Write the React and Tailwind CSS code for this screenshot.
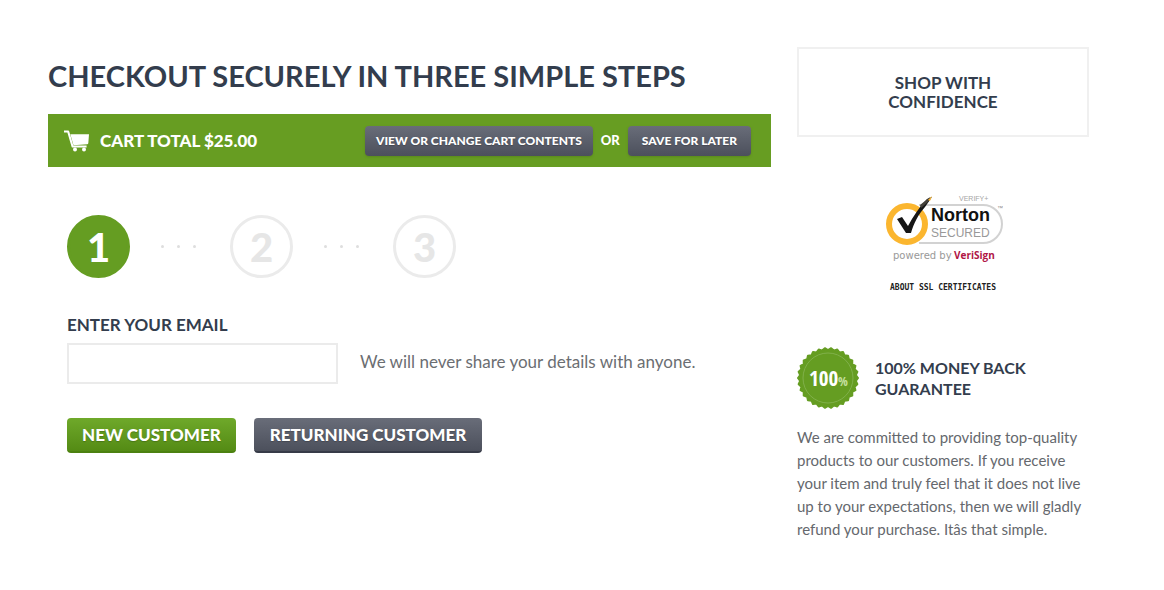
import React, { useState } from 'react'

const steps = [1, 2, 3]

const CartIcon = () => (
    <svg className="w-[26px] h-[22px] shrink-0" viewBox="0 0 26 22" fill="none" aria-hidden="true">
        <path d="M0 1.600h4.200l4.400 15h14" stroke="#fff" strokeWidth="2" strokeLinejoin="round" />
        <path d="M6.300 4.200h18.700l-.7 9c-.1.700-.5 1-1.200 1L9.500 15.200z" fill="#fff" />
        <circle cx="11" cy="19.400" r="2" fill="#fff" />
        <circle cx="20" cy="19.400" r="2" fill="#fff" />
    </svg>
)

const NortonLogo = () => (
    <svg className="w-[120px] h-[70px]" viewBox="0 0 120 70" role="img" aria-label="Norton Secured, powered by VeriSign">
        <path d="M36 10h64a19 19 0 0 1 0 38H36" fill="none" stroke="#d2d2d2" strokeWidth="2" />
        <circle cx="24" cy="29" r="18" fill="#fff" stroke="#fbb62f" strokeWidth="6" />
        <path d="M14 24l5-2 6 9C30 22 36 12 44 4l5-2-7 10C35 20 31 28 28 38h-5z" fill="#161616" />
        <path d="M37 10l10-8-2 5-7 6z" fill="#44403a" />
        <path d="M45 5l4-4-2 5z" fill="#fbb62f" />
        <text x="76" y="6" fontSize="7" fill="#a5a5a5" fontFamily="Liberation Sans, Arial, sans-serif">VERIFY+</text>
        <text x="114" y="15" fontSize="6" fill="#8a8a8a" fontFamily="Liberation Sans, Arial, sans-serif">&#8482;</text>
        <text x="48" y="26" fontSize="18" fontWeight="700" fill="#111" fontFamily="Liberation Sans, Arial, sans-serif">Norton</text>
        <text x="48" y="42" fontSize="12" fill="#999" fontFamily="Liberation Sans, Arial, sans-serif">SECURED</text>
        <text x="10" y="64" fontSize="10" fill="#999" fontFamily="DejaVu Sans, sans-serif">powered by</text>
        <text x="71" y="64" fontSize="10" fontWeight="700" fill="#b01546" fontFamily="Open Sans, sans-serif">VeriSign</text>
    </svg>
)

// alternating outer / inner radius gives the seal its toothed edge
const sealPoints = Array.from({ length: 60 }, (_, i) => {
    const radius = i % 2 === 0 ? 30 : 28
    const angle = (i * Math.PI) / 30
    return `${(31 + radius * Math.cos(angle)).toFixed(2)},${(32 + radius * Math.sin(angle)).toFixed(2)}`
}).join(' ')

const Seal = () => (
    <svg className="w-16 h-16 shrink-0" viewBox="0 0 64 64" aria-hidden="true">
        <polygon points={sealPoints} fill="#659d22" stroke="#659d22" strokeWidth="2" strokeLinejoin="round" />
        <circle cx="31" cy="32" r="25" fill="none" stroke="#80b04a" strokeWidth="1" />
        <text x="12" y="40" fontSize="21" fontWeight="700" fill="#fff" fontFamily="Open Sans Condensed, Roboto Condensed, Roboto, sans-serif">100</text>
        <text x="41" y="40" fontSize="13" fontWeight="700" fill="#c5e0a0" fontFamily="Open Sans Condensed, Roboto, sans-serif">%</text>
    </svg>
)

const Dots = () => (
    <div className="flex w-[100px] justify-center gap-[13px] pr-1" aria-hidden="true">
        <span className="size-[3px] rounded-full bg-[#dedede]" />
        <span className="size-[3px] rounded-full bg-[#dedede]" />
        <span className="size-[3px] rounded-full bg-[#dedede]" />
    </div>
)

const CartButton = ({ className, children }) => (
    <button
        type="button"
        className={`h-[30px] rounded-[4px] bg-linear-to-b from-[#696d79] to-[#4c505c] text-[12px] font-black whitespace-nowrap shadow-sm text-shadow-xs ${className}`}
    >
        {children}
    </button>
)

const App = () => {
    const [email, setEmail] = useState("")

    return (
        <div className="flex items-start gap-[26px] bg-white pt-[47px] pr-[75px] pb-12 pl-12 font-['Lato',sans-serif] text-[#333d4d]">
            {/* Checkout */}
            <main className="min-w-0 flex-1">
                <h1 className="text-[29px] leading-[58px] font-bold whitespace-nowrap">CHECKOUT SECURELY IN THREE SIMPLE STEPS</h1>

                <div className="mt-[9px] flex h-[53px] items-center bg-[#679d22] pr-5 pl-4 text-white">
                    <CartIcon />
                    <p className="ml-[10px] text-[17px] font-black whitespace-nowrap">CART TOTAL $25.00</p>
                    <div className="ml-auto flex items-center gap-2">
                        <CartButton className="px-[11px]">VIEW OR CHANGE CART CONTENTS</CartButton>
                        <span className="text-[13px] font-black">OR</span>
                        <CartButton className="px-[14px]">SAVE FOR LATER</CartButton>
                    </div>
                </div>

                <div className="px-[19px] pt-12">
                    <ol className="flex items-center">
                        {steps.map((step) => (
                            <li key={step} className="flex items-center">
                                {step > 1 && <Dots />}
                                <span
                                    className={`flex size-[63px] items-center justify-center rounded-full border-[3px] text-[40px] leading-none font-black ${
                                        step === 1
                                            ? "border-[#659d22] bg-[#659d22] text-white"
                                            : "border-[#ebebeb] bg-white text-[#e6e6e6]"
                                    }`}
                                >
                                    {step}
                                </span>
                            </li>
                        ))}
                    </ol>

                    <form className="mt-9" onSubmit={(e) => e.preventDefault()}>
                        <label htmlFor="email" className="block text-[17px] leading-[22px] font-bold">ENTER YOUR EMAIL</label>
                        <div className="mt-[7px] flex items-center gap-[22px]">
                            <input
                                type="email"
                                id="email"
                                name="email"
                                value={email}
                                onChange={(e) => setEmail(e.target.value)}
                                className="h-[41px] w-[271px] border-2 border-[#ebebeb] bg-white px-3 outline-none focus:border-[#659d22]"
                            />
                            <p className="pb-1 text-[17px] whitespace-nowrap text-[#6b6e72]">We will never share your details with anyone.</p>
                        </div>
                        <div className="mt-[34px] flex gap-[18px]">
                            <button type="submit" className="h-[35px] rounded-[4px] border-b-2 border-[#4c8110] bg-linear-to-b from-[#6fa92a] to-[#548b14] px-[15px] text-[17px] font-black whitespace-nowrap text-white text-shadow-xs">
                                NEW CUSTOMER
                            </button>
                            <button type="button" className="h-[35px] rounded-[4px] border-b-2 border-[#373b48] bg-linear-to-b from-[#696d79] to-[#4c505c] px-4 text-[17px] font-black whitespace-nowrap text-white text-shadow-xs">
                                RETURNING CUSTOMER
                            </button>
                        </div>
                    </form>
                </div>
            </main>

            {/* Trust column */}
            <aside className="w-[292px] shrink-0">
                <h2 className="border-2 border-[#f0f0f0] py-6 text-center text-[17px] leading-[19px] font-bold">
                    SHOP WITH<br />CONFIDENCE
                </h2>

                <div className="mt-[58px] flex flex-col items-center">
                    <NortonLogo />
                    <a href="#ssl" className="mt-[18px] font-['DejaVu_Sans_Mono',monospace] text-[8px] leading-[10px] font-bold text-[#222]">ABOUT SSL CERTIFICATES</a>
                </div>

                <div className="mt-[53px] flex items-center gap-[14px]">
                    <Seal />
                    <h3 className="text-[16px] leading-[21px] font-bold">100% MONEY BACK<br />GUARANTEE</h3>
                </div>
                <p className="mt-4 text-[15px] leading-[23px] whitespace-nowrap text-[#65686d]">
                    We are committed to providing top-quality<br />
                    products to our customers. If you receive<br />
                    your item and truly feel that it does not live<br />
                    up to your expectations, then we will gladly<br />
                    refund your purchase. Itâs that simple.
                </p>
            </aside>
        </div>
    )
}

export default App
